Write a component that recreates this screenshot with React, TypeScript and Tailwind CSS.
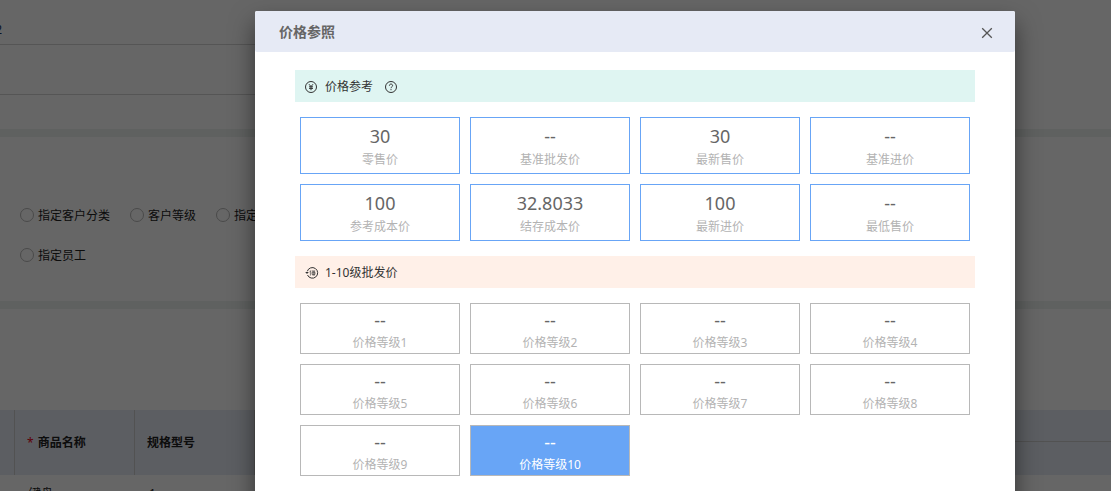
import React, { useState } from 'react';

interface IPrice {
  label: string;
  value: string;
}

const referencePrices: IPrice[] = [
  { label: '零售价', value: '30' },
  { label: '基准批发价', value: '--' },
  { label: '最新售价', value: '30' },
  { label: '基准进价', value: '--' },
  { label: '参考成本价', value: '100' },
  { label: '结存成本价', value: '32.8033' },
  { label: '最新进价', value: '100' },
  { label: '最低售价', value: '--' },
];

const levels = [1, 2, 3, 4, 5, 6, 7, 8, 9, 10];

const YenIcon = () => (
  <svg className="size-3" viewBox="0 0 12 12" fill="none" stroke="#333" aria-hidden="true">
    <circle cx="6" cy="6" r="5.5" strokeWidth="1" />
    <path d="M4 3.2 6 5.6l2-2.4M6 5.6V9.2M4 5.8h4M4 7.4h4" strokeWidth="1" />
  </svg>
);

const HelpIcon = () => (
  <svg className="size-3" viewBox="0 0 12 12" fill="none" stroke="#333" aria-hidden="true">
    <circle cx="6" cy="6" r="5.5" strokeWidth="1" />
    <path d="M4.4 4.7c0-2.2 3.2-2.2 3.2 0 0 1.1-1.6 1.1-1.6 2.5" strokeWidth="1" />
    <path d="M6 8.1v1.1" strokeWidth="1" />
  </svg>
);

const LevelIcon = () => (
  <svg className="h-3 w-[14px]" viewBox="0 0 14 12" fill="none" stroke="#333" aria-hidden="true">
    <path d="M2.3 4.3a5.3 5.3 0 1 1 .2 3.7" strokeWidth="1" />
    <path d="M.2 4.9h3.6L2 6.9z" fill="#333" stroke="none" />
    <path d="M5.4 3.4v5.2M4.6 5.2l.8-1M6.6 3.9h3.6M7 5.2h3v2.2H7zM8.1 4v4.8M9.2 4v4.8" strokeWidth="0.6" />
  </svg>
);

const Radio: React.FC<{ label: string }> = ({ label }) => (
  <label className="flex shrink-0 items-center gap-1">
    <input
      type="radio"
      name="scope"
      className="size-[14px] appearance-none rounded-full border border-[#b8b8b8] bg-white"
    />
    <span className="pt-0.5">{label}</span>
  </label>
);

const App: React.FC = () => {
  const [open, setOpen] = useState<boolean>(true);
  const [selected, setSelected] = useState<number>(10);

  return (
    <div className="relative h-screen overflow-hidden bg-[#edf2f1] font-['Noto_Sans','Noto_Sans_CJK_SC',sans-serif] text-xs text-[#222]">
      {/* Form behind the dialog */}
      <div className="flex flex-col gap-2">
        <section className="h-[129px] bg-white">
          <div className="w-1/2">
            <div className="flex h-[45px] items-end border-b border-[#d5d5d5] pb-1.5">
              <span className="flex w-0.5 justify-end overflow-hidden text-[#14315f]">2</span>
            </div>
            <div className="h-[50px] border-b border-[#d5d5d5]" />
          </div>
        </section>

        <section className="bg-white px-5 pt-[58px] pb-[26px]">
          <div className="flex h-10 gap-5">
            <Radio label="指定客户分类" />
            <Radio label="客户等级" />
            <Radio label="指定客户" />
          </div>
          <div className="flex h-10 gap-5">
            <Radio label="指定员工" />
          </div>
        </section>

        <section className="bg-white pt-[101px]">
          <table className="w-full table-fixed border-separate border-spacing-0 text-left">
            <colgroup>
              <col className="w-[15px]" />
              <col className="w-[120px]" />
              <col className="w-[120px]" />
              <col />
            </colgroup>
            <thead className="bg-[#e6eaf5]">
              <tr className="h-8">
                <th rowSpan={2} className="border-r border-[#ccc]" />
                <th rowSpan={2} className="border-r border-[#ccc] pl-3 font-bold">
                  <span className="mr-1 font-normal text-[#e60012]">*</span>商品名称
                </th>
                <th rowSpan={2} className="border-r border-[#ccc] pl-3 font-bold">规格型号</th>
                <th className="border-b border-[#ccc]" />
              </tr>
              <tr className="h-[33px]">
                <th />
              </tr>
            </thead>
            <tbody>
              <tr className="h-[38px]">
                <td />
                <td className="pl-[14px]">键盘</td>
                <td className="pl-[14px]">1</td>
                <td />
              </tr>
            </tbody>
          </table>
        </section>
      </div>

      {open && (
        <div className="absolute inset-0 flex justify-end overflow-hidden bg-black/60 pt-[11px] pr-24">
          <div
            role="dialog"
            aria-labelledby="dialog-title"
            className="min-h-[560px] w-full max-w-[760px] self-start rounded-xs bg-white shadow-[0_12px_24px_rgba(0,0,0,0.5)]"
          >
            <header className="flex h-[41px] items-center justify-between rounded-xs bg-[#e6eaf5] pr-[22px] pl-6">
              <h2 id="dialog-title" className="text-sm font-bold text-[#666]">价格参照</h2>
              <button type="button" aria-label="关闭" onClick={() => setOpen(false)} className="pt-0.5">
                <svg className="size-3" viewBox="0 0 12 12" stroke="#555" strokeWidth="1.3" aria-hidden="true">
                  <path d="M1.2 1.2l9.6 9.6M10.8 1.2l-9.6 9.6" />
                </svg>
              </button>
            </header>

            <div className="px-10 pt-[18px]">
              <h3 className="flex h-8 items-center bg-[#dff5f2] pt-0.5 pl-[10px] text-[#333]">
                <YenIcon />
                <span className="mr-3 ml-2">价格参考</span>
                <HelpIcon />
              </h3>
              <div className="grid grid-cols-4 gap-[10px] px-[5px] py-[15px]">
                {referencePrices.map((price) => (
                  <button
                    key={price.label}
                    type="button"
                    className="flex h-[57px] flex-col items-center border border-[#68a5f6] pt-[6px]"
                  >
                    <span className="text-lg leading-6 text-[#666]">{price.value}</span>
                    <span className="leading-6 text-[#b3b3b3]">{price.label}</span>
                  </button>
                ))}
              </div>

              <h3 className="flex h-8 items-center bg-[#fff0e8] pt-0.5 pl-[10px] text-[#333]">
                <LevelIcon />
                <span className="ml-1.5">1-10级批发价</span>
              </h3>
              <div className="grid grid-cols-4 gap-[10px] px-[5px] py-[15px]">
                {levels.map((level) => (
                  <button
                    key={level}
                    type="button"
                    onClick={() => setSelected(level)}
                    className={`flex h-[51px] flex-col items-center border border-[#b8b8b8] pt-1 ${
                      selected === level ? 'bg-[#68a5f6] text-white' : 'text-[#b3b3b3]'
                    }`}
                  >
                    <span className={`text-lg leading-6 ${selected === level ? '' : 'text-[#666]'}`}>--</span>
                    <span className="leading-[22px]">价格等级{level}</span>
                  </button>
                ))}
              </div>
            </div>
          </div>
        </div>
      )}
    </div>
  );
};

export default App;
